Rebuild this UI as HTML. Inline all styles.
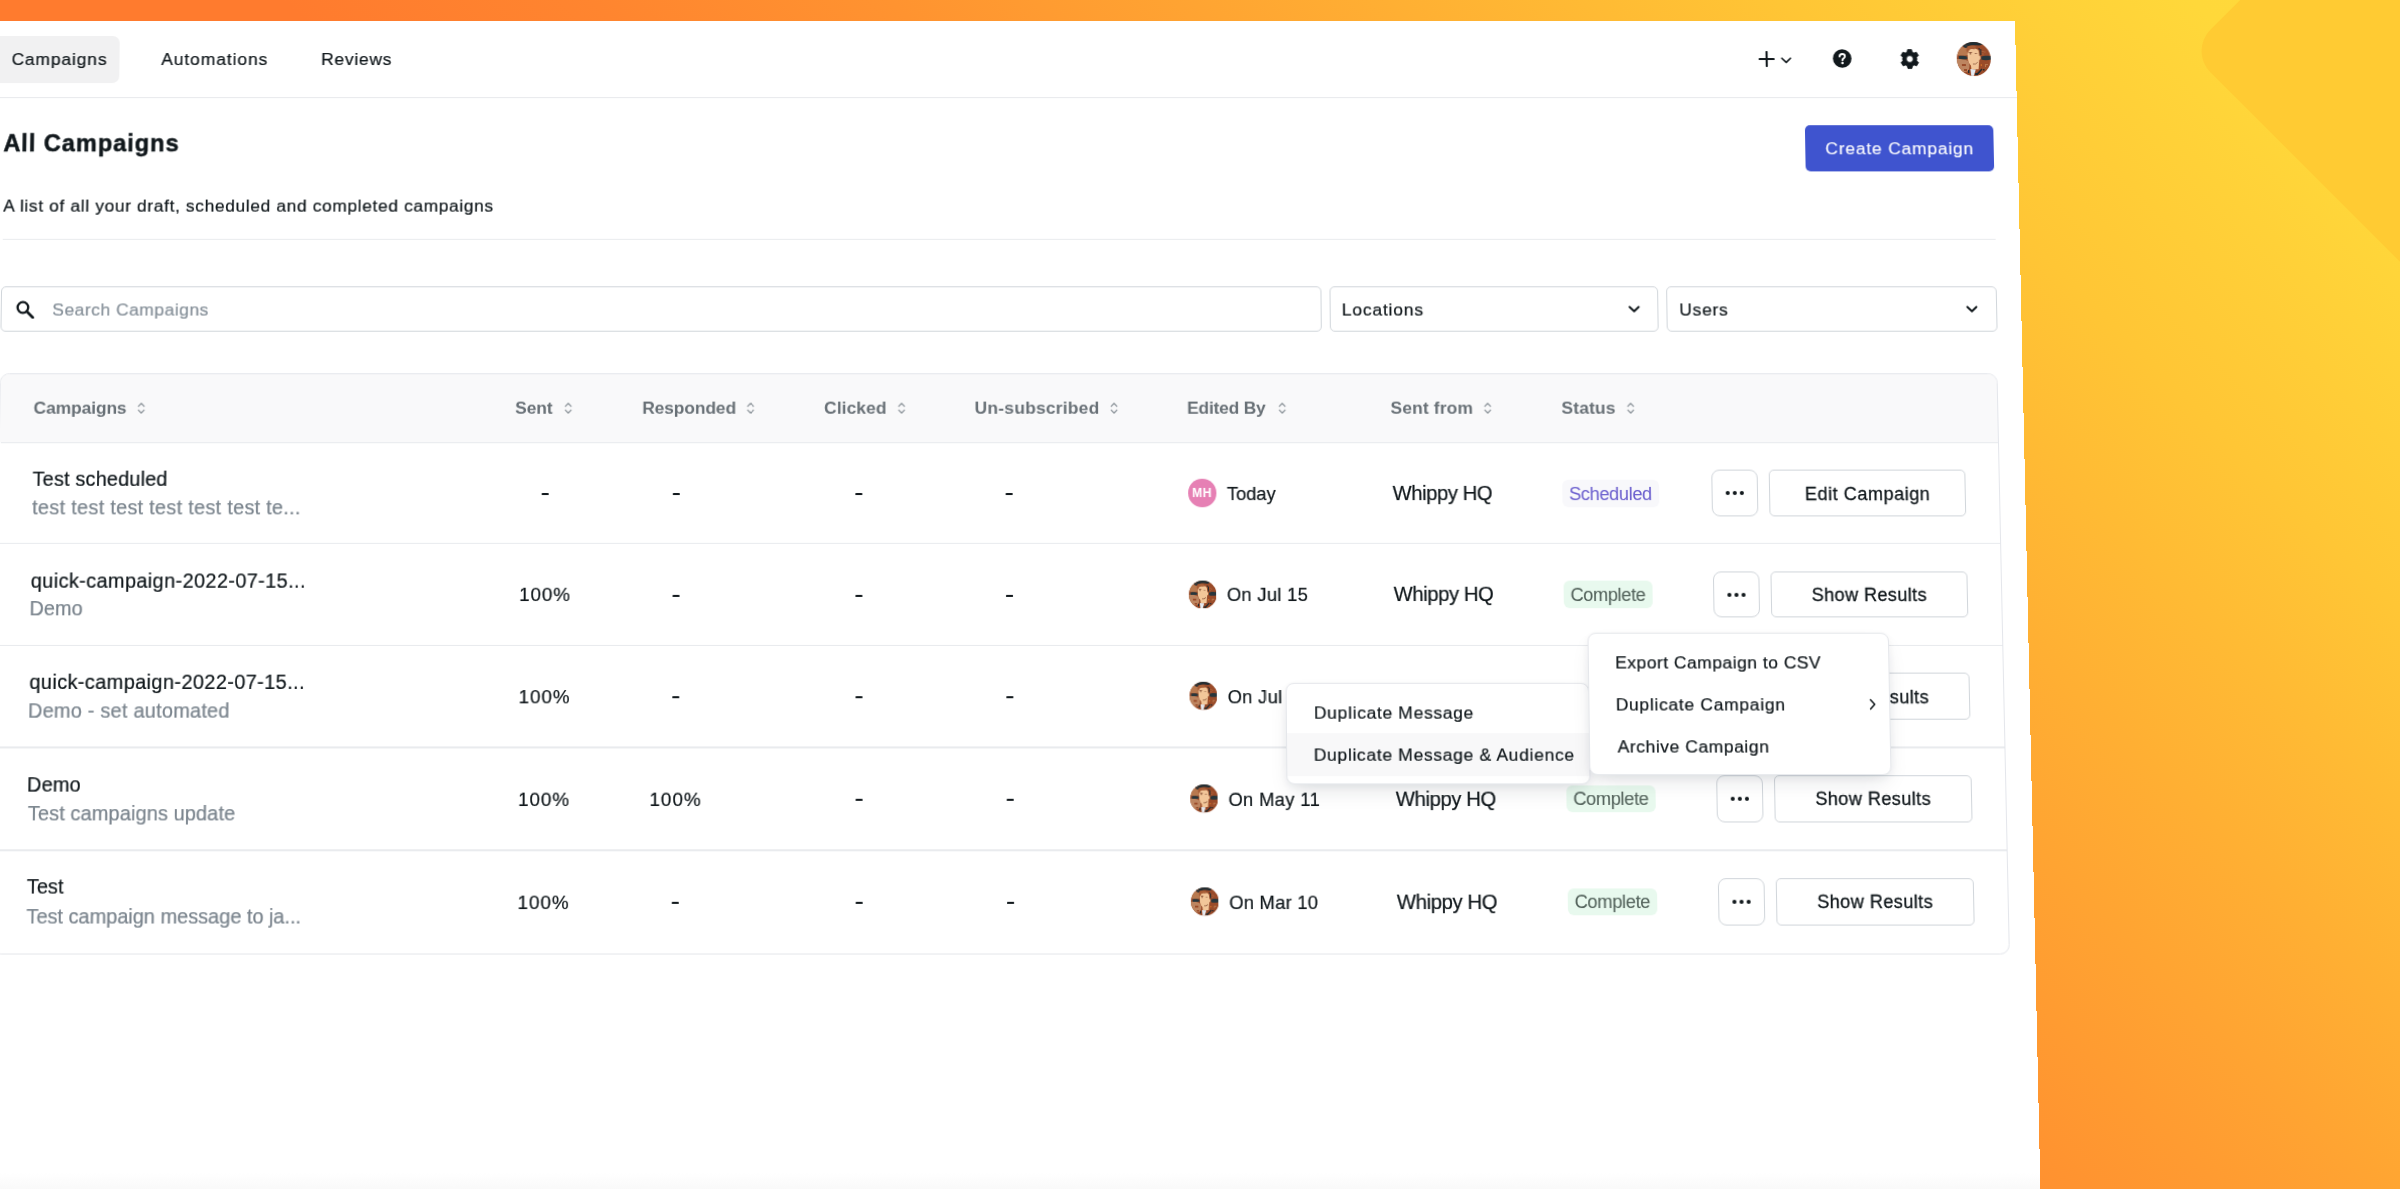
<!DOCTYPE html>
<html><head><meta charset="utf-8"><title>All Campaigns</title>
<style>
html,body{margin:0;padding:0}
body{width:2400px;height:1189px;overflow:hidden;position:relative;font-family:"Liberation Sans",sans-serif;
background:linear-gradient(45deg,#ff7b2e 0%,#ff7b2e 41%,#ff852f 49.6%,#ff9330 57.9%,#ffa432 66.3%,#ffc635 83%,#ffd83a 94.2%,#ffda3b 100%)}
#shape{position:absolute;left:2272px;top:-149px;width:400px;height:400px;background:#ffcb33;border-radius:30px;transform:rotate(45deg)}
#panel{position:absolute;left:0;top:21px;width:2015px;height:1190px;background:#fff;transform-origin:816px 0;transform:matrix3d(1,0,0,0, 0,1,0,-1.813e-05, 0,0,1,0, 0,0,0,1)}
#panel::after{content:"";position:absolute;left:0;right:0;top:1128px;height:20px;background:linear-gradient(#fff,#f8f8f8)}
.b{position:absolute;display:block}
.t{position:absolute;white-space:nowrap;line-height:0}
body.measure{background:#fff}
body.measure #panel{transform:none}
body.measure #shape, body.measure .b, body.measure #panel::after{visibility:hidden}
body.measure .t{color:#000 !important;-webkit-text-stroke:0 !important}
</style></head>
<body>
<svg width="0" height="0" style="position:absolute"><defs>
<g id="gear"><path fill="#11181c" d="M-1.9 -9.6 H1.9 L2.5 -7.1 A7.4 7.4 0 0 1 4.3 -6.1 L6.8 -6.8 L8.7 -3.5 L6.9 -1.7 A7.4 7.4 0 0 1 6.9 1.7 L8.7 3.5 L6.8 6.8 L4.3 6.1 A7.4 7.4 0 0 1 2.5 7.1 L1.9 9.6 H-1.9 L-2.5 7.1 A7.4 7.4 0 0 1 -4.3 6.1 L-6.8 6.8 L-8.7 3.5 L-6.9 1.7 A7.4 7.4 0 0 1 -6.9 -1.7 L-8.7 -3.5 L-6.8 -6.8 L-4.3 -6.1 A7.4 7.4 0 0 1 -2.5 -7.1 Z M0 -3.4 A3.4 3.4 0 1 0 0 3.4 A3.4 3.4 0 1 0 0 -3.4 Z" fill-rule="evenodd" stroke="#11181c" stroke-width="0.8" stroke-linejoin="round"/></g>
<clipPath id="avc"><circle cx="17" cy="17" r="17"/></clipPath>
<g id="avatar" clip-path="url(#avc)">
<rect width="34" height="34" fill="#9a4b29"/>
<path d="M0 5 C3 4 8 5 11 7 L11 13 C8 14 4 14 0 13 Z" fill="#b8794f"/>
<path d="M0 17 C4 17 8 17 11 19 C13 22 13 26 11 29 C8 31 4 30 0 27 Z" fill="#bd8560"/>
<path d="M5 22 H9 V24 H5 Z M7 27 H10 V29 H7 Z" fill="#9a4b29"/>
<path d="M7 0 H28 C27 2 25 3.5 22 3.6 C19 3 15 3 12 4 C10 4 8 2.5 7 0 Z" fill="#1f2d33"/>
<path d="M6 3 C8 2.5 10 3 11 4.5 L10 6 C8 6 6.5 5 6 3 Z" fill="#233238"/>
<path d="M2 14.2 C4 13.4 8 13.6 10.5 14.8 L10.5 17 C7 17.4 4 17.4 2 16.8 Z" fill="#27363c"/>
<path d="M24.5 14.6 C27 13.4 31 13.6 34 14 V17.6 C31 18.4 27 18.4 24.5 17.6 Z" fill="#27363c"/>
<path d="M20 31 L24.5 26.5 L25.5 27.5 L21.5 32 Z M26 27 h1.5 v1.5 h-1.5 Z M11 28 h1.3 v3 h-1.3 Z M18 31 h3 v2 h-3 Z" fill="#1d2a30"/>
<path d="M23.3 7 h1.2 v6 h-1.2 Z M22 6 h1 v1.5 h-1 Z M18 4.5 h1.2 v1.2 h-1.2 Z" fill="#1d2a30"/>
<path d="M10.8 10 C11 7.5 13 6.3 16 6.2 C19 6.2 21.5 7 22 9 L22.6 14 L23.8 14.5 L23.6 17 L22.4 18 L22 22 L21.6 27.2 L14.4 27.2 L14 23.5 C12.5 22 11.2 19.5 11 17 Z" fill="#f2c699"/>
<path d="M9.5 8 C10 5 12 3.6 15 3.6 C17 3.6 19 4 20.5 5.2 C19 5.6 18 6.4 17.4 7.4 C15.5 6.6 13.5 7 12.5 8.4 C11.8 9.4 11.4 10.4 11 12 Z" fill="#a85d36"/>
<path d="M12.3 10 h3 v0.9 h-1 v1.6 h-1.3 v-1.6 h-0.7 Z M18 11 h2.4 v0.8 h-2.4 Z" fill="#8f5a3f"/>
<path d="M16 22 H18.6 L20.8 20.2" fill="none" stroke="#8f5a3f" stroke-width="0.8"/>
<path d="M13.4 27 L18.8 27.4 L16.6 34 H14.2 Z" fill="#e4ebf3"/>
<rect x="23.8" y="22.5" width="1.1" height="1.1" fill="#ff8a2a"/>
<path d="M28 22 h3 v1 h-2 v2 h-1 Z M25.5 9 h1 v1 h-1 Z M27.5 9.5 h1 v1 h-1 Z M25.5 11.5 h1 v1 h-1 Z" fill="#b8794f"/>
</g>
</defs></svg>
<div id="shape"></div>
<div id="panel">
<div class="b " style="left:-11.42px;top:14.80px;width:131.61px;height:47.13px;background:#f1f1f2;border-radius:7px"></div>
<div class="b " style="left:0.00px;top:75.79px;width:2015.00px;height:1.20px;background:#e7e9ec"></div>
<div class="b " style="left:5.50px;top:216.84px;width:1985.00px;height:1.40px;background:#e9ebee"></div>
<div class="b " style="left:1802.72px;top:103.80px;width:188.37px;height:46.39px;background:#3f54cf;border-radius:5px"></div>
<div class="b " style="left:5.43px;top:263.73px;width:1313.64px;height:45.52px;border:1.3px solid #d1d6db;border-radius:5px;box-sizing:border-box;background:#fff"></div>
<div class="b " style="left:1327.03px;top:263.73px;width:327.29px;height:45.52px;border:1.3px solid #d1d6db;border-radius:5px;box-sizing:border-box;background:#fff"></div>
<div class="b " style="left:1661.88px;top:263.73px;width:328.68px;height:45.52px;border:1.3px solid #d1d6db;border-radius:5px;box-sizing:border-box;background:#fff"></div>
<div class="b tbl" style="left:5.00px;top:349.56px;width:1985.00px;height:568.77px;border:1.5px solid #e4e6eb;border-radius:9.5px;box-sizing:border-box;background:#fff;overflow:hidden"></div>
<div class="b " style="left:5.90px;top:350.86px;width:1983.20px;height:66.74px;background:#f9f9fa;border-radius:8.5px 8.5px 0 0"></div>
<div class="b " style="left:6.50px;top:417.50px;width:1982.00px;height:1.40px;background:#e8eaee"></div>
<div class="b " style="left:6.50px;top:516.95px;width:1982.00px;height:1.30px;background:#e9ebee"></div>
<div class="b " style="left:6.50px;top:616.82px;width:1982.00px;height:1.30px;background:#e9ebee"></div>
<div class="b " style="left:6.50px;top:716.44px;width:1982.00px;height:1.30px;background:#e9ebee"></div>
<div class="b " style="left:6.50px;top:816.37px;width:1982.00px;height:1.30px;background:#e9ebee"></div>
<svg class="b" style="left:142.03px;top:377.70px" width="8" height="13" viewBox="0 0 8 13"><path d="M1.2 4.6 L4 1.8 L6.8 4.6 M1.2 8.4 L4 11.2 L6.8 8.4" fill="none" stroke="#8a9298" stroke-width="1.25" stroke-linecap="round" stroke-linejoin="round"/></svg>
<svg class="b" style="left:566.05px;top:377.70px" width="8" height="13" viewBox="0 0 8 13"><path d="M1.2 4.6 L4 1.8 L6.8 4.6 M1.2 8.4 L4 11.2 L6.8 8.4" fill="none" stroke="#8a9298" stroke-width="1.25" stroke-linecap="round" stroke-linejoin="round"/></svg>
<svg class="b" style="left:747.28px;top:377.70px" width="8" height="13" viewBox="0 0 8 13"><path d="M1.2 4.6 L4 1.8 L6.8 4.6 M1.2 8.4 L4 11.2 L6.8 8.4" fill="none" stroke="#8a9298" stroke-width="1.25" stroke-linecap="round" stroke-linejoin="round"/></svg>
<svg class="b" style="left:896.73px;top:377.70px" width="8" height="13" viewBox="0 0 8 13"><path d="M1.2 4.6 L4 1.8 L6.8 4.6 M1.2 8.4 L4 11.2 L6.8 8.4" fill="none" stroke="#8a9298" stroke-width="1.25" stroke-linecap="round" stroke-linejoin="round"/></svg>
<svg class="b" style="left:1107.75px;top:377.70px" width="8" height="13" viewBox="0 0 8 13"><path d="M1.2 4.6 L4 1.8 L6.8 4.6 M1.2 8.4 L4 11.2 L6.8 8.4" fill="none" stroke="#8a9298" stroke-width="1.25" stroke-linecap="round" stroke-linejoin="round"/></svg>
<svg class="b" style="left:1274.58px;top:377.70px" width="8" height="13" viewBox="0 0 8 13"><path d="M1.2 4.6 L4 1.8 L6.8 4.6 M1.2 8.4 L4 11.2 L6.8 8.4" fill="none" stroke="#8a9298" stroke-width="1.25" stroke-linecap="round" stroke-linejoin="round"/></svg>
<svg class="b" style="left:1478.90px;top:377.70px" width="8" height="13" viewBox="0 0 8 13"><path d="M1.2 4.6 L4 1.8 L6.8 4.6 M1.2 8.4 L4 11.2 L6.8 8.4" fill="none" stroke="#8a9298" stroke-width="1.25" stroke-linecap="round" stroke-linejoin="round"/></svg>
<svg class="b" style="left:1620.90px;top:377.70px" width="8" height="13" viewBox="0 0 8 13"><path d="M1.2 4.6 L4 1.8 L6.8 4.6 M1.2 8.4 L4 11.2 L6.8 8.4" fill="none" stroke="#8a9298" stroke-width="1.25" stroke-linecap="round" stroke-linejoin="round"/></svg>
<div class="b " style="left:1703.50px;top:445.20px;width:46.90px;height:45.80px;border:1.3px solid #d1d6db;border-radius:8px;box-sizing:border-box;background:#fff"></div>
<div class="b " style="left:1718.40px;top:466.10px;width:4.00px;height:4.00px;background:#11181c;border-radius:50%"></div>
<div class="b " style="left:1725.00px;top:466.10px;width:4.00px;height:4.00px;background:#11181c;border-radius:50%"></div>
<div class="b " style="left:1731.60px;top:466.10px;width:4.00px;height:4.00px;background:#11181c;border-radius:50%"></div>
<div class="b " style="left:1760.70px;top:445.20px;width:195.60px;height:45.80px;border:1.3px solid #d1d6db;border-radius:5px;box-sizing:border-box;background:#fff"></div>
<div class="b " style="left:1556.40px;top:454.80px;width:95.20px;height:26.80px;background:#f8f8fb;border-radius:6px"></div>
<div class="b " style="left:1185.10px;top:454.40px;width:27.50px;height:27.50px;background:#e680b4;border-radius:50%"></div>
<div class="b " style="left:1703.50px;top:544.60px;width:46.90px;height:45.80px;border:1.3px solid #d1d6db;border-radius:8px;box-sizing:border-box;background:#fff"></div>
<div class="b " style="left:1718.40px;top:565.50px;width:4.00px;height:4.00px;background:#11181c;border-radius:50%"></div>
<div class="b " style="left:1725.00px;top:565.50px;width:4.00px;height:4.00px;background:#11181c;border-radius:50%"></div>
<div class="b " style="left:1731.60px;top:565.50px;width:4.00px;height:4.00px;background:#11181c;border-radius:50%"></div>
<div class="b " style="left:1760.70px;top:544.60px;width:195.60px;height:45.80px;border:1.3px solid #d1d6db;border-radius:5px;box-sizing:border-box;background:#fff"></div>
<div class="b " style="left:1556.40px;top:554.40px;width:87.50px;height:26.50px;background:#e8f9ee;border-radius:6px"></div>
<svg class="b" style="left:1184.90px;top:553.60px" width="27.6" height="27.6" viewBox="0 0 34 34"><use href="#avatar"/></svg>
<div class="b " style="left:1703.50px;top:644.47px;width:46.90px;height:45.80px;border:1.3px solid #d1d6db;border-radius:8px;box-sizing:border-box;background:#fff"></div>
<div class="b " style="left:1718.40px;top:665.37px;width:4.00px;height:4.00px;background:#11181c;border-radius:50%"></div>
<div class="b " style="left:1725.00px;top:665.37px;width:4.00px;height:4.00px;background:#11181c;border-radius:50%"></div>
<div class="b " style="left:1731.60px;top:665.37px;width:4.00px;height:4.00px;background:#11181c;border-radius:50%"></div>
<div class="b " style="left:1760.70px;top:644.47px;width:195.60px;height:45.80px;border:1.3px solid #d1d6db;border-radius:5px;box-sizing:border-box;background:#fff"></div>
<svg class="b" style="left:1184.90px;top:653.47px" width="27.6" height="27.6" viewBox="0 0 34 34"><use href="#avatar"/></svg>
<div class="b " style="left:1703.50px;top:744.09px;width:46.90px;height:45.80px;border:1.3px solid #d1d6db;border-radius:8px;box-sizing:border-box;background:#fff"></div>
<div class="b " style="left:1718.40px;top:764.99px;width:4.00px;height:4.00px;background:#11181c;border-radius:50%"></div>
<div class="b " style="left:1725.00px;top:764.99px;width:4.00px;height:4.00px;background:#11181c;border-radius:50%"></div>
<div class="b " style="left:1731.60px;top:764.99px;width:4.00px;height:4.00px;background:#11181c;border-radius:50%"></div>
<div class="b " style="left:1760.70px;top:744.09px;width:195.60px;height:45.80px;border:1.3px solid #d1d6db;border-radius:5px;box-sizing:border-box;background:#fff"></div>
<div class="b " style="left:1556.40px;top:753.89px;width:87.50px;height:26.50px;background:#e8f9ee;border-radius:6px"></div>
<svg class="b" style="left:1184.90px;top:753.09px" width="27.6" height="27.6" viewBox="0 0 34 34"><use href="#avatar"/></svg>
<div class="b " style="left:1703.50px;top:844.02px;width:46.90px;height:45.80px;border:1.3px solid #d1d6db;border-radius:8px;box-sizing:border-box;background:#fff"></div>
<div class="b " style="left:1718.40px;top:864.92px;width:4.00px;height:4.00px;background:#11181c;border-radius:50%"></div>
<div class="b " style="left:1725.00px;top:864.92px;width:4.00px;height:4.00px;background:#11181c;border-radius:50%"></div>
<div class="b " style="left:1731.60px;top:864.92px;width:4.00px;height:4.00px;background:#11181c;border-radius:50%"></div>
<div class="b " style="left:1760.70px;top:844.02px;width:195.60px;height:45.80px;border:1.3px solid #d1d6db;border-radius:5px;box-sizing:border-box;background:#fff"></div>
<div class="b " style="left:1556.40px;top:853.82px;width:87.50px;height:26.50px;background:#e8f9ee;border-radius:6px"></div>
<svg class="b" style="left:1184.90px;top:853.02px" width="27.6" height="27.6" viewBox="0 0 34 34"><use href="#avatar"/></svg>
<div class="b " style="left:544.10px;top:468.20px;width:7.20px;height:2.00px;background:#11181c;border-radius:0.4px"></div>
<div class="b " style="left:674.20px;top:468.20px;width:7.20px;height:2.00px;background:#11181c;border-radius:0.4px"></div>
<div class="b " style="left:855.10px;top:468.20px;width:7.20px;height:2.00px;background:#11181c;border-radius:0.4px"></div>
<div class="b " style="left:1004.20px;top:468.20px;width:7.20px;height:2.00px;background:#11181c;border-radius:0.4px"></div>
<div class="b " style="left:674.20px;top:567.60px;width:7.20px;height:2.00px;background:#11181c;border-radius:0.4px"></div>
<div class="b " style="left:855.10px;top:567.60px;width:7.20px;height:2.00px;background:#11181c;border-radius:0.4px"></div>
<div class="b " style="left:1004.20px;top:567.60px;width:7.20px;height:2.00px;background:#11181c;border-radius:0.4px"></div>
<div class="b " style="left:674.20px;top:667.47px;width:7.20px;height:2.00px;background:#11181c;border-radius:0.4px"></div>
<div class="b " style="left:855.10px;top:667.47px;width:7.20px;height:2.00px;background:#11181c;border-radius:0.4px"></div>
<div class="b " style="left:1004.20px;top:667.47px;width:7.20px;height:2.00px;background:#11181c;border-radius:0.4px"></div>
<div class="b " style="left:855.10px;top:767.09px;width:7.20px;height:2.00px;background:#11181c;border-radius:0.4px"></div>
<div class="b " style="left:1004.20px;top:767.09px;width:7.20px;height:2.00px;background:#11181c;border-radius:0.4px"></div>
<div class="b " style="left:674.20px;top:867.02px;width:7.20px;height:2.00px;background:#11181c;border-radius:0.4px"></div>
<div class="b " style="left:855.10px;top:867.02px;width:7.20px;height:2.00px;background:#11181c;border-radius:0.4px"></div>
<div class="b " style="left:1004.20px;top:867.02px;width:7.20px;height:2.00px;background:#11181c;border-radius:0.4px"></div>
<svg class="b" style="left:20.43px;top:277.59px" width="18.5" height="18.5" viewBox="0 0 18.5 18.5"><circle cx="7" cy="7" r="5.3" fill="none" stroke="#11181c" stroke-width="2.3"/><path d="M11 11 L17 17" stroke="#11181c" stroke-width="2.6" stroke-linecap="round"/></svg>
<svg class="b" style="left:1623.93px;top:282.64px" width="12" height="8" viewBox="0 0 12 8"><path d="M1.4 1.5 L5.9 5.8 L10.4 1.5" fill="none" stroke="#11181c" stroke-width="2.0" stroke-linecap="round" stroke-linejoin="round"/></svg>
<svg class="b" style="left:1959.79px;top:282.64px" width="12" height="8" viewBox="0 0 12 8"><path d="M1.4 1.5 L5.9 5.8 L10.4 1.5" fill="none" stroke="#11181c" stroke-width="2.0" stroke-linecap="round" stroke-linejoin="round"/></svg>
<svg class="b" style="left:1757.85px;top:29.97px" width="16" height="16" viewBox="0 0 16 16"><path d="M8 1 V15 M1 8 H15" stroke="#11181c" stroke-width="2.1" stroke-linecap="round"/></svg>
<svg class="b" style="left:1779.91px;top:36.17px" width="11" height="7" viewBox="0 0 11 7"><path d="M1.2 1.2 L5.5 5.4 L9.8 1.2" fill="none" stroke="#11181c" stroke-width="1.6" stroke-linecap="round" stroke-linejoin="round"/></svg>
<svg class="b" style="left:1831.79px;top:28.47px" width="19" height="19" viewBox="0 0 19 19"><circle cx="9.5" cy="9.5" r="9.3" fill="#11181c"/><path d="M6.9 7.6 C6.9 5.9 8.1 5 9.6 5 C11.1 5 12.2 5.9 12.2 7.3 C12.2 8.5 11.4 9 10.7 9.5 C10 10 9.7 10.4 9.7 11.2" fill="none" stroke="#fff" stroke-width="1.9" stroke-linecap="round"/><circle cx="9.7" cy="13.9" r="1.25" fill="#fff"/></svg>
<svg class="b" style="left:1898.74px;top:28.17px" width="20" height="20" viewBox="-10 -10 20 20"><use href="#gear"/></svg>
<svg class="b" style="left:1956.40px;top:20.87px" width="34" height="34" viewBox="0 0 34 34"><use href="#avatar"/></svg>
<div class="t" id="nav1" style="left:12.14px;top:38.00px;font-size:17.40px;letter-spacing:0.879px;color:#11181c;-webkit-text-stroke:0.22px #11181c;">Campaigns</div>
<div class="t" id="nav2" style="left:161.67px;top:38.00px;font-size:17.40px;letter-spacing:0.945px;color:#11181c;-webkit-text-stroke:0.22px #11181c;">Automations</div>
<div class="t" id="nav3" style="left:321.55px;top:38.00px;font-size:17.40px;letter-spacing:0.724px;color:#11181c;-webkit-text-stroke:0.22px #11181c;">Reviews</div>
<div class="t" id="title" style="left:5.14px;top:122.00px;font-size:23.60px;letter-spacing:0.919px;color:#11181c;font-weight:700;-webkit-text-stroke:0.50px #11181c;">All Campaigns</div>
<div class="t" id="subtitle" style="left:5.96px;top:184.00px;font-size:17.30px;letter-spacing:0.650px;color:#11181c;-webkit-text-stroke:0.22px #11181c;">A list of all your draft, scheduled and completed campaigns</div>
<div class="t" id="create" style="left:1823.06px;top:127.00px;font-size:17.40px;letter-spacing:0.794px;color:#ffffff;-webkit-text-stroke:0.12px #ffffff;">Create Campaign</div>
<div class="t" id="search" style="left:56.37px;top:287.00px;font-size:17.40px;letter-spacing:0.483px;color:#87919a;-webkit-text-stroke:0.22px #87919a;">Search Campaigns</div>
<div class="t" id="loc" style="left:1339.09px;top:287.00px;font-size:17.40px;letter-spacing:0.794px;color:#11181c;-webkit-text-stroke:0.22px #11181c;">Locations</div>
<div class="t" id="users" style="left:1674.76px;top:287.00px;font-size:17.40px;letter-spacing:0.690px;color:#11181c;-webkit-text-stroke:0.22px #11181c;">Users</div>
<div class="t" id="h0" style="left:39.12px;top:384.00px;font-size:17.30px;letter-spacing:-0.097px;color:#687076;font-weight:700;">Campaigns</div>
<div class="t" id="h1" style="left:517.27px;top:384.00px;font-size:17.30px;letter-spacing:-0.040px;color:#687076;font-weight:700;">Sent</div>
<div class="t" id="h2" style="left:643.40px;top:384.00px;font-size:17.30px;letter-spacing:-0.099px;color:#687076;font-weight:700;">Responded</div>
<div class="t" id="h3" style="left:824.08px;top:384.00px;font-size:17.30px;letter-spacing:0.088px;color:#687076;font-weight:700;">Clicked</div>
<div class="t" id="h4" style="left:973.61px;top:384.00px;font-size:17.30px;letter-spacing:0.218px;color:#687076;font-weight:700;">Un-subscribed</div>
<div class="t" id="h5" style="left:1184.53px;top:384.00px;font-size:17.30px;letter-spacing:-0.195px;color:#687076;font-weight:700;">Edited By</div>
<div class="t" id="h6" style="left:1386.53px;top:384.00px;font-size:17.30px;letter-spacing:0.145px;color:#687076;font-weight:700;">Sent from</div>
<div class="t" id="h7" style="left:1556.29px;top:384.00px;font-size:17.30px;letter-spacing:0.166px;color:#687076;font-weight:700;">Status</div>
<div class="t" id="r0t1" style="left:39.09px;top:454.00px;font-size:19.70px;letter-spacing:0.184px;color:#11181c;-webkit-text-stroke:0.22px #11181c;">Test scheduled</div>
<div class="t" id="r0t2" style="left:39.08px;top:482.00px;font-size:19.70px;letter-spacing:0.292px;color:#7b858e;-webkit-text-stroke:0.22px #7b858e;">test test test test test test te...</div>
<div class="t" id="r0who" style="left:1223.38px;top:469.00px;font-size:18.10px;letter-spacing:0.017px;color:#11181c;-webkit-text-stroke:0.22px #11181c;">Today</div>
<div class="t" id="r0hq" style="left:1387.69px;top:468.00px;font-size:20.00px;letter-spacing:-0.384px;color:#11181c;-webkit-text-stroke:0.22px #11181c;">Whippy HQ</div>
<div class="t" id="r0badge" style="left:1562.68px;top:469.00px;font-size:18.00px;letter-spacing:-0.333px;color:#6e62cf;-webkit-text-stroke:0.08px #6e62cf;">Scheduled</div>
<div class="t" id="r0btn" style="left:1796.59px;top:469.00px;font-size:17.90px;letter-spacing:0.533px;color:#11181c;-webkit-text-stroke:0.30px #11181c;">Edit Campaign</div>
<div class="t" id="r1t1" style="left:38.74px;top:554.00px;font-size:19.70px;letter-spacing:0.383px;color:#11181c;-webkit-text-stroke:0.22px #11181c;">quick-campaign-2022-07-15...</div>
<div class="t" id="r1t2" style="left:37.76px;top:581.00px;font-size:19.70px;letter-spacing:0.089px;color:#7b858e;-webkit-text-stroke:0.22px #7b858e;">Demo</div>
<div class="t" id="r1who" style="left:1222.68px;top:568.00px;font-size:18.10px;letter-spacing:0.325px;color:#11181c;-webkit-text-stroke:0.22px #11181c;">On Jul 15</div>
<div class="t" id="r1hq" style="left:1387.69px;top:567.00px;font-size:20.00px;letter-spacing:-0.384px;color:#11181c;-webkit-text-stroke:0.22px #11181c;">Whippy HQ</div>
<div class="t" id="r1badge" style="left:1562.68px;top:568.00px;font-size:18.00px;letter-spacing:-0.343px;color:#55645d;-webkit-text-stroke:0.08px #55645d;">Complete</div>
<div class="t" id="r1btn" style="left:1801.46px;top:568.00px;font-size:17.90px;letter-spacing:0.394px;color:#11181c;-webkit-text-stroke:0.30px #11181c;">Show Results</div>
<div class="t" id="r1v0" style="left:522.32px;top:568.00px;font-size:18.60px;letter-spacing:0.889px;color:#11181c;-webkit-text-stroke:0.22px #11181c;">100%</div>
<div class="t" id="r2t1" style="left:38.74px;top:653.00px;font-size:19.70px;letter-spacing:0.383px;color:#11181c;-webkit-text-stroke:0.22px #11181c;">quick-campaign-2022-07-15...</div>
<div class="t" id="r2t2" style="left:37.76px;top:681.00px;font-size:19.70px;letter-spacing:0.221px;color:#7b858e;-webkit-text-stroke:0.22px #7b858e;">Demo - set automated</div>
<div class="t" id="r2who" style="left:1222.68px;top:668.00px;font-size:18.10px;letter-spacing:0.325px;color:#11181c;-webkit-text-stroke:0.22px #11181c;">On Jul 15</div>
<div class="t" id="r2btn" style="left:1801.46px;top:668.00px;font-size:17.90px;letter-spacing:0.394px;color:#11181c;-webkit-text-stroke:0.30px #11181c;">Show Results</div>
<div class="t" id="r2v0" style="left:522.32px;top:668.00px;font-size:18.60px;letter-spacing:0.889px;color:#11181c;-webkit-text-stroke:0.22px #11181c;">100%</div>
<div class="t" id="r3t1" style="left:37.76px;top:753.00px;font-size:19.70px;letter-spacing:0.178px;color:#11181c;-webkit-text-stroke:0.22px #11181c;">Demo</div>
<div class="t" id="r3t2" style="left:39.09px;top:781.00px;font-size:19.70px;letter-spacing:0.093px;color:#7b858e;-webkit-text-stroke:0.22px #7b858e;">Test campaigns update</div>
<div class="t" id="r3who" style="left:1222.68px;top:768.00px;font-size:18.10px;letter-spacing:0.358px;color:#11181c;-webkit-text-stroke:0.22px #11181c;">On May 11</div>
<div class="t" id="r3hq" style="left:1387.69px;top:767.00px;font-size:20.00px;letter-spacing:-0.384px;color:#11181c;-webkit-text-stroke:0.22px #11181c;">Whippy HQ</div>
<div class="t" id="r3badge" style="left:1562.68px;top:767.00px;font-size:18.00px;letter-spacing:-0.343px;color:#55645d;-webkit-text-stroke:0.08px #55645d;">Complete</div>
<div class="t" id="r3btn" style="left:1801.46px;top:767.00px;font-size:17.90px;letter-spacing:0.394px;color:#11181c;-webkit-text-stroke:0.30px #11181c;">Show Results</div>
<div class="t" id="r3v0" style="left:522.32px;top:768.00px;font-size:18.60px;letter-spacing:0.889px;color:#11181c;-webkit-text-stroke:0.22px #11181c;">100%</div>
<div class="t" id="r3v1" style="left:651.79px;top:768.00px;font-size:18.60px;letter-spacing:0.978px;color:#11181c;-webkit-text-stroke:0.22px #11181c;">100%</div>
<div class="t" id="r4t1" style="left:39.09px;top:852.00px;font-size:19.70px;letter-spacing:0.000px;color:#11181c;-webkit-text-stroke:0.22px #11181c;">Test</div>
<div class="t" id="r4t2" style="left:39.09px;top:881.00px;font-size:19.70px;letter-spacing:-0.039px;color:#7b858e;-webkit-text-stroke:0.22px #7b858e;">Test campaign message to ja...</div>
<div class="t" id="r4who" style="left:1222.68px;top:868.00px;font-size:18.10px;letter-spacing:0.250px;color:#11181c;-webkit-text-stroke:0.22px #11181c;">On Mar 10</div>
<div class="t" id="r4hq" style="left:1387.69px;top:867.00px;font-size:20.00px;letter-spacing:-0.384px;color:#11181c;-webkit-text-stroke:0.22px #11181c;">Whippy HQ</div>
<div class="t" id="r4badge" style="left:1562.68px;top:867.00px;font-size:18.00px;letter-spacing:-0.343px;color:#55645d;-webkit-text-stroke:0.08px #55645d;">Complete</div>
<div class="t" id="r4btn" style="left:1801.46px;top:867.00px;font-size:17.90px;letter-spacing:0.394px;color:#11181c;-webkit-text-stroke:0.30px #11181c;">Show Results</div>
<div class="t" id="r4v0" style="left:522.32px;top:868.00px;font-size:18.60px;letter-spacing:0.889px;color:#11181c;-webkit-text-stroke:0.22px #11181c;">100%</div>
<div class="t" id="mh" style="left:1188.93px;top:468.00px;font-size:12.00px;letter-spacing:0.614px;color:#ffffff;font-weight:700;">MH</div>
<div class="b " style="left:1280.10px;top:654.25px;width:299.63px;height:98.34px;background:#fff;border:1.2px solid #e5e7eb;border-radius:8px;box-sizing:border-box;box-shadow:0 10px 22px -6px rgba(20,30,50,.13),0 3px 7px rgba(20,30,50,.05)"></div>
<div class="b " style="left:1281.10px;top:702.93px;width:297.63px;height:41.68px;background:#f8f8f9"></div>
<div class="b " style="left:1579.05px;top:605.28px;width:297.71px;height:138.94px;background:#fff;border:1.2px solid #e5e7eb;border-radius:8px;box-sizing:border-box;box-shadow:0 10px 22px -6px rgba(20,30,50,.13),0 3px 7px rgba(20,30,50,.05)"></div>
<svg class="b" style="left:1856.40px;top:668.65px" width="8" height="12" viewBox="0 0 8 12"><path d="M1.6 1.6 L5.8 6 L1.6 10.4" fill="none" stroke="#11181c" stroke-width="1.5" stroke-linecap="round" stroke-linejoin="round"/></svg>
<div class="t" id="m1a" style="left:1605.94px;top:634.00px;font-size:17.30px;letter-spacing:0.482px;color:#11181c;-webkit-text-stroke:0.22px #11181c;">Export Campaign to CSV</div>
<div class="t" id="m1b" style="left:1605.93px;top:675.00px;font-size:17.30px;letter-spacing:0.677px;color:#11181c;-webkit-text-stroke:0.22px #11181c;">Duplicate Campaign</div>
<div class="t" id="m1c" style="left:1607.19px;top:716.00px;font-size:17.30px;letter-spacing:0.542px;color:#11181c;-webkit-text-stroke:0.22px #11181c;">Archive Campaign</div>
<div class="t" id="m2a" style="left:1307.72px;top:683.00px;font-size:17.30px;letter-spacing:0.656px;color:#11181c;-webkit-text-stroke:0.22px #11181c;">Duplicate Message</div>
<div class="t" id="m2b" style="left:1307.22px;top:724.00px;font-size:17.30px;letter-spacing:0.654px;color:#11181c;-webkit-text-stroke:0.22px #11181c;">Duplicate Message &amp; Audience</div>
</div>
</body></html>
